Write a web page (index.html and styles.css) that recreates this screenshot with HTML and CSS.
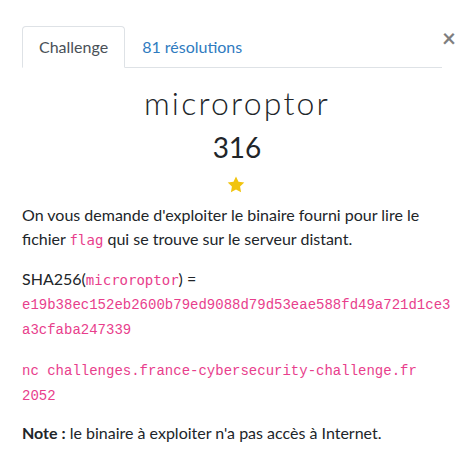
FILE: index.html
```html
<!DOCTYPE html>
<html lang="fr">
<head>
<meta charset="utf-8">
<title>microroptor</title>
<link rel="stylesheet" href="styles.css">
</head>
<body>
<div class="modal">
  <div class="header">
    <ul class="tabs">
      <li class="tab active">Challenge</li>
      <li class="tab"><a href="#">81 résolutions</a></li>
    </ul>
    <button class="close" type="button">&times;</button>
  </div>
  <div class="body">
    <h2 class="title">microroptor</h2>
    <h3 class="score">316</h3>
    <div class="stars">
      <svg width="18" height="17" viewBox="0 0 24 23"><path d="M12 0.8l3.4 7.1 7.8 1-5.7 5.4 1.4 7.7L12 18.3l-6.9 3.7 1.4-7.7L0.8 8.9l7.8-1z" fill="#f1c40f"/></svg>
    </div>
    <p>On vous demande d'exploiter le binaire fourni pour lire le fichier <code>flag</code> qui se trouve sur le serveur distant.</p>
    <p>SHA256(<code>microroptor</code>) =<br><code class="mono hash">e19b38ec152eb2600b79ed9088d79d53eae588fd49a721d1ce3a3cfaba247339</code></p>
    <p class="cmd"><code class="mono">nc challenges.france-cybersecurity-challenge.fr 2052</code></p>
    <p><strong>Note :</strong> le binaire à exploiter n'a pas accès à Internet.</p>
  </div>
</div>
</body>
</html>
```
FILE: styles.css
```css
* { box-sizing: border-box; }
html, body { margin: 0; padding: 0; background: #fff; }
body {
  font-family: Lato, "Liberation Sans", sans-serif;
  font-size: 16px;
  line-height: 1.5;
  color: #212529;
}
.modal { padding: 26px 22px 0 22px; }
.header { display: flex; align-items: flex-start; }
.tabs {
  flex: 1;
  display: flex;
  list-style: none;
  margin: 0;
  padding: 0;
  border-bottom: 1px solid #dee2e6;
}
.tab {
  padding: 8px 16px;
  border: 1px solid transparent;
  border-top-left-radius: 4px;
  border-top-right-radius: 4px;
  margin-bottom: -1px;
}
.tab.active {
  color: #495057;
  border-color: #dee2e6 #dee2e6 #fff;
  background: #fff;
}
.tab a { color: #2f7bbf; text-decoration: none; }
.close {
  flex: none;
  background: none;
  border: 0;
  padding: 0;
  margin: 0 -4px 0 0;
  width: 14px;
  font-family: Lato, "Liberation Sans", sans-serif;
  font-size: 24px;
  font-weight: 700;
  line-height: 24px;
  color: #000;
  opacity: 0.5;
  text-align: center;
  overflow: visible;
}
.body { padding-top: 16px; }
.title {
  margin: 0;
  text-align: center;
  font-family: Lato, sans-serif;
  font-weight: 300;
  font-size: 32px;
  letter-spacing: 2.2px;
  line-height: 1.2;
  color: #212529;
}
.score {
  margin: 9px 0 0;
  text-align: center;
  font-weight: 400;
  font-size: 28px;
  line-height: 1.2;
}
.stars { display: flex; justify-content: center; padding: 11px 0 0; height: 38px; }
.stars svg { display: block; margin-left: -2px; }
p { margin: 0 0 16px; }
p.cmd { margin-bottom: 14px; }
code {
  font-family: "DejaVu Sans Mono", monospace;
  font-size: 14px;
  color: #e83e8c;
}
code.mono { font-family: "Liberation Mono", monospace; }
code.hash { word-break: break-all; }
strong { font-weight: 700; }
```
